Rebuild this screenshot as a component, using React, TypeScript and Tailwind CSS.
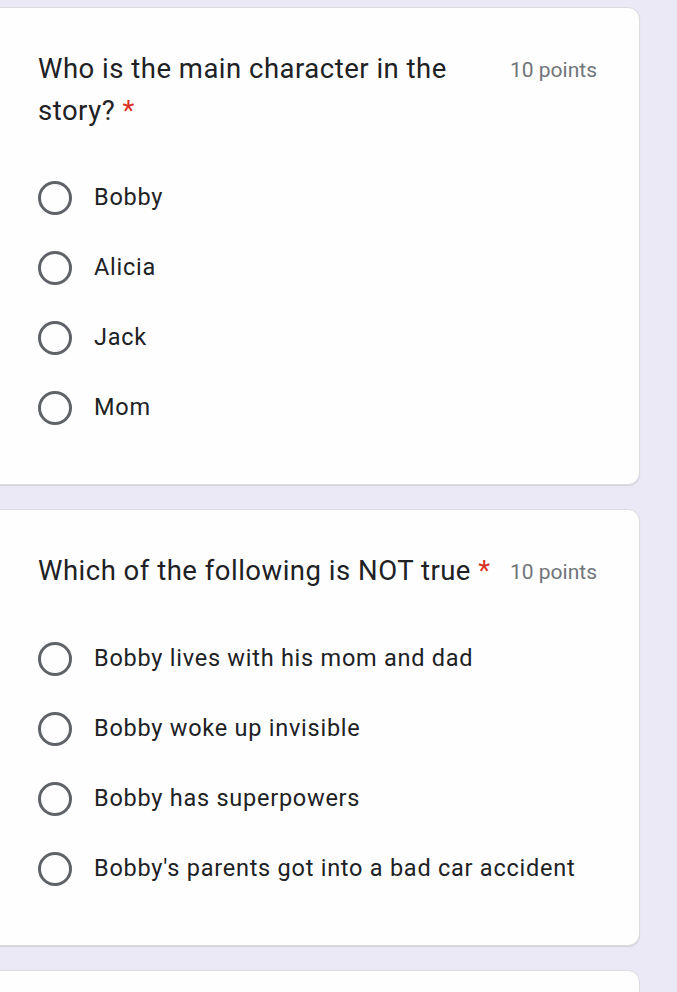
type Question = {
  title: string;
  points: number;
  options: string[];
};

const QUESTIONS: Question[] = [
  {
    title: "Who is the main character in the story?",
    points: 10,
    options: ["Bobby", "Alicia", "Jack", "Mom"],
  },
  {
    title: "Which of the following is NOT true",
    points: 10,
    options: [
      "Bobby lives with his mom and dad",
      "Bobby woke up invisible",
      "Bobby has superpowers",
      "Bobby's parents got into a bad car accident",
    ],
  },
];

function RadioOption({ label }: { label: string }) {
  return (
    <label className="flex h-[70px] cursor-pointer items-center gap-[22px]">
      <span className="h-[34px] w-[34px] shrink-0 rounded-full border-[3px] border-[#5f6368]" />
      <span className="text-[23.5px] tracking-[0.75px] text-[#202124]">{label}</span>
    </label>
  );
}

function QuestionCard({ question }: { question: Question }) {
  return (
    <section className="ml-[-20px] w-[660px] rounded-[12px] border border-[#dadce0] bg-[#fefefe] pt-[40px] pr-[42px] pb-[41px] pl-[57px] shadow-[0_1px_1px_rgba(60,64,67,0.15)]">
      <div className="flex items-start justify-between gap-[12px]">
        <h2 className="text-[27.5px] leading-[42px] tracking-[0.5px] text-[#202124]">
          {question.title}{" "}
          <span className="text-[#d93025]">*</span>
        </h2>
        <span className="shrink-0 pt-[1px] text-[21px] leading-[42px] text-[#70757a]">
          {question.points} points
        </span>
      </div>

      <div className="mt-[31px] flex flex-col">
        {question.options.map((option) => (
          <RadioOption key={option} label={option} />
        ))}
      </div>
    </section>
  );
}

export default function App() {
  return (
    <main className="min-h-screen overflow-hidden bg-[#ebe9f5] pt-[7px] font-['Roboto','Liberation_Sans',sans-serif]">
      <div className="flex flex-col gap-[24px]">
        {QUESTIONS.map((question) => (
          <QuestionCard key={question.title} question={question} />
        ))}
        <section className="ml-[-20px] h-[60px] w-[660px] rounded-[12px] border border-[#dadce0] bg-[#fefefe]" />
      </div>
    </main>
  );
}
